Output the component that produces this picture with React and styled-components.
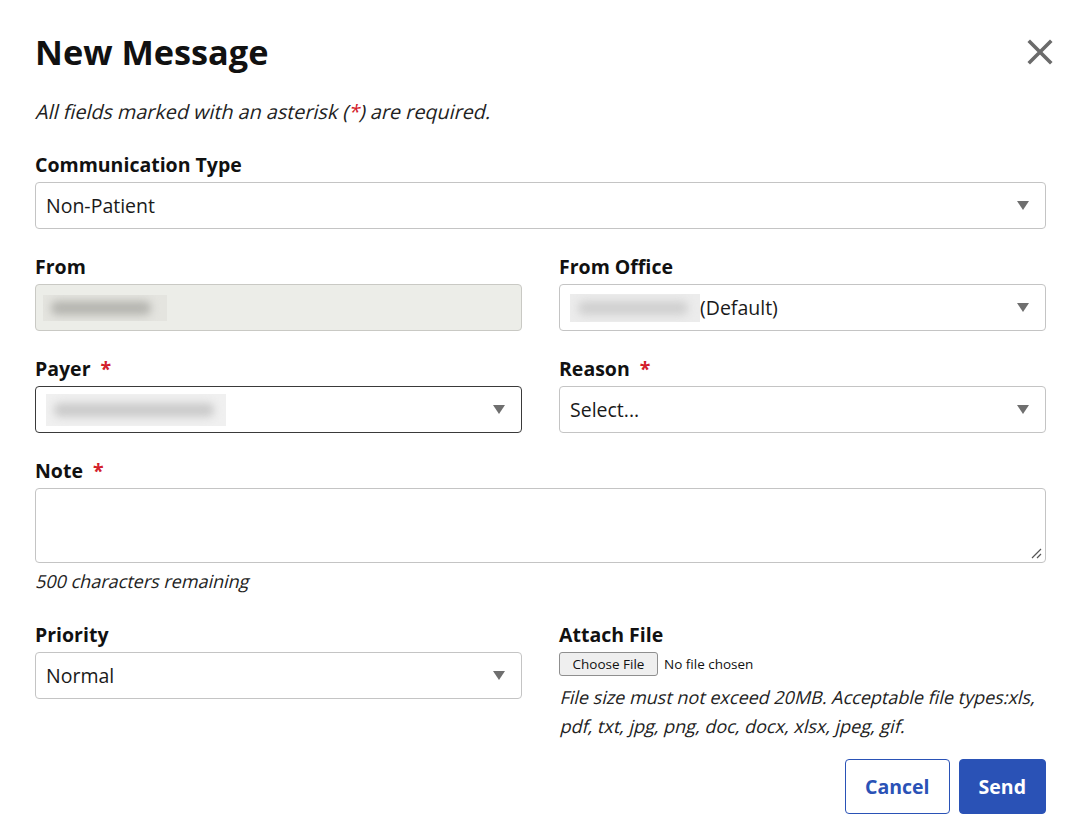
import React from "react";
import styled, { createGlobalStyle } from "styled-components";

const GlobalStyle = createGlobalStyle`
  html, body {
    margin: 0;
    padding: 0;
    background: #ffffff;
  }
  body {
    font-family: "Open Sans", "Noto Sans", sans-serif;
    color: #111111;
  }
`;

const Modal = styled.div`
  width: 1082px;
  height: 825px;
  box-sizing: border-box;
  padding: 30px 36px 0 35px;
  background: #fff;
`;

const Header = styled.div`
  display: flex;
  justify-content: space-between;
  align-items: center;
  height: 44px;
`;

const Title = styled.h1`
  margin: 0;
  font-size: 34.3px;
  font-weight: 700;
  line-height: 44px;
  color: #111;
`;

const CloseButton = styled.button`
  border: none;
  background: none;
  padding: 0;
  width: 28px;
  height: 28px;
  margin-right: -8px;
  display: flex;
  align-items: center;
  justify-content: center;
  cursor: pointer;
`;

/* the reference uses a slanted upright face, not a true italic */
const Slant = styled.span`
  display: ${(p) => (p.$block ? "block" : "inline-block")};
  transform: skewX(-14deg);
  transform-origin: 0 78%;
`;

const Hint = styled.p`
  margin: 26px 0 0;
  font-size: 19.75px;
  line-height: 24px;
  color: #222;
`;

const Star = styled.span`
  color: #d3202b;
  margin-left: ${(p) => (p.$gap ? "10px" : "0")};
`;

const Form = styled.div`
  margin-top: 29px;
  display: flex;
  flex-direction: column;
`;

const Row = styled.div`
  display: grid;
  grid-template-columns: ${(p) => (p.$split ? "487px 487px" : "1fr")};
  column-gap: 37px;
  margin-bottom: ${(p) => p.$mb || "26px"};
`;

const Field = styled.div`
  display: flex;
  flex-direction: column;
`;

const Label = styled.label`
  font-size: 19.5px;
  font-weight: 700;
  line-height: 24px;
  margin-bottom: 5px;
  color: #111;
`;

const SelectBox = styled.div`
  height: 47px;
  box-sizing: border-box;
  border: 1px solid ${(p) => (p.$focus ? "#3a3a3a" : "#c4c4c4")};
  border-radius: 4px;
  display: flex;
  align-items: center;
  padding: 0 16px 0 10px;
  font-size: 19.5px;
  color: #1a1a1a;
  background: #fff;
`;

const SelectValue = styled.div`
  flex: 1;
  display: flex;
  align-items: center;
`;

const ReadOnlyBox = styled.div`
  height: 47px;
  box-sizing: border-box;
  border: 1px solid #c9c9c4;
  border-radius: 4px;
  background: #ecede8;
  display: flex;
  align-items: center;
  padding: 0 7px;
`;

const Blur = styled.div`
  width: ${(p) => p.$w}px;
  height: ${(p) => p.$h || 26}px;
  background: ${(p) => p.$bg || "#bdbdb8"};
  filter: blur(${(p) => p.$blur || 4}px);
  border-radius: 6px;
`;

const BlurWrap = styled.div`
  width: ${(p) => p.$w}px;
  height: ${(p) => p.$h}px;
  background: ${(p) => p.$bg || "#f2f2f2"};
  display: flex;
  align-items: center;
  padding-left: 8px;
  box-sizing: border-box;
  overflow: hidden;
`;

const TextArea = styled.div`
  height: 75px;
  box-sizing: border-box;
  border: 1px solid #c4c4c4;
  border-radius: 4px;
  position: relative;
`;

const Grip = styled.svg`
  position: absolute;
  right: 3px;
  bottom: 3px;
`;

const Counter = styled.div`
  margin-top: 6px;
  font-size: 18px;
  line-height: 24px;
  color: #222;
`;

const FileRow = styled.div`
  display: flex;
  align-items: center;
  height: 24px;
`;

const FileButton = styled.button`
  height: 24px;
  width: 99px;
  box-sizing: border-box;
  border: 1px solid #8f8f8f;
  border-radius: 3px;
  background: #efefef;
  font-family: "Open Sans", "Noto Sans", sans-serif;
  font-size: 13.5px;
  color: #111;
  padding: 0;
`;

const FileStatus = styled.span`
  margin-left: 6px;
  font-size: 13.5px;
  color: #111;
`;

const FileHelp = styled.div`
  margin: 7px 0 0;
  font-size: 18px;
  line-height: 29px;
  color: #222;
`;

const Actions = styled.div`
  display: flex;
  justify-content: flex-end;
  gap: 9px;
  margin-top: 18px;
`;

const Button = styled.button`
  height: 55px;
  box-sizing: border-box;
  padding: 0 19px;
  border-radius: 4px;
  border: 1px solid #2a52b6;
  background: ${(p) => (p.$primary ? "#2a52b6" : "#fff")};
  color: ${(p) => (p.$primary ? "#fff" : "#2a52b6")};
  font-family: "Open Sans", "Noto Sans", sans-serif;
  font-size: 19.5px;
  font-weight: 700;
  cursor: pointer;
`;

const Caret = () => (
  <svg width="12" height="9" viewBox="0 0 12 9">
    <polygon points="0,0 12,0 6,9" fill="#6f6f6f" />
  </svg>
);

const Select = ({ children, focus }) => (
  <SelectBox $focus={focus}>
    <SelectValue>{children}</SelectValue>
    <Caret />
  </SelectBox>
);

const App = () => {
  return (
    <>
      <GlobalStyle />
      <Modal>
        <Header>
          <Title>New Message</Title>
          <CloseButton aria-label="Close">
            <svg width="26" height="26" viewBox="0 0 26 26">
              <path
                d="M3 3 L23 23 M23 3 L3 23"
                stroke="#6b6b6b"
                strokeWidth="3.6"
                strokeLinecap="square"
              />
            </svg>
          </CloseButton>
        </Header>
        <Hint>
          <Slant>
            All fields marked with an asterisk (<Star>*</Star>) are required.
          </Slant>
        </Hint>

        <Form>
          <Row>
            <Field>
              <Label>Communication Type</Label>
              <Select>Non-Patient</Select>
            </Field>
          </Row>

          <Row $split>
            <Field>
              <Label>From</Label>
              <ReadOnlyBox>
                <BlurWrap $w={124} $h={26} $bg="#e4e4df">
                  <Blur $w={100} $h={14} $bg="#b5b5b0" $blur={4} />
                </BlurWrap>
              </ReadOnlyBox>
            </Field>
            <Field>
              <Label>From Office</Label>
              <Select>
                <BlurWrap $w={130} $h={28} $bg="#ececec">
                  <Blur $w={110} $h={14} $bg="#d0d0d0" $blur={4} />
                </BlurWrap>
                <span>(Default)</span>
              </Select>
            </Field>
          </Row>

          <Row $split>
            <Field>
              <Label>
                Payer<Star $gap>*</Star>
              </Label>
              <Select focus>
                <BlurWrap $w={180} $h={32} $bg="#f0f0f0">
                  <Blur $w={160} $h={14} $bg="#cacaca" $blur={4} />
                </BlurWrap>
              </Select>
            </Field>
            <Field>
              <Label>
                Reason<Star $gap>*</Star>
              </Label>
              <Select>Select...</Select>
            </Field>
          </Row>

          <Row $mb="30px">
            <Field>
              <Label>
                Note<Star $gap>*</Star>
              </Label>
              <TextArea>
                <Grip width="12" height="12" viewBox="0 0 12 12">
                  <path d="M11 2 L2 11 M11 7 L7 11" stroke="#555" strokeWidth="1.2" />
                </Grip>
              </TextArea>
              <Counter>
                <Slant>500 characters remaining</Slant>
              </Counter>
            </Field>
          </Row>

          <Row $split $mb="0">
            <Field>
              <Label>Priority</Label>
              <Select>Normal</Select>
            </Field>
            <Field>
              <Label>Attach File</Label>
              <FileRow>
                <FileButton>Choose File</FileButton>
                <FileStatus>No file chosen</FileStatus>
              </FileRow>
              <FileHelp>
                <Slant $block>
                  File size must not exceed 20MB. Acceptable file types:xls,
                </Slant>
                <Slant $block>pdf, txt, jpg, png, doc, docx, xlsx, jpeg, gif.</Slant>
              </FileHelp>
            </Field>
          </Row>

          <Actions>
            <Button>Cancel</Button>
            <Button $primary>Send</Button>
          </Actions>
        </Form>
      </Modal>
    </>
  );
};

export default App;
